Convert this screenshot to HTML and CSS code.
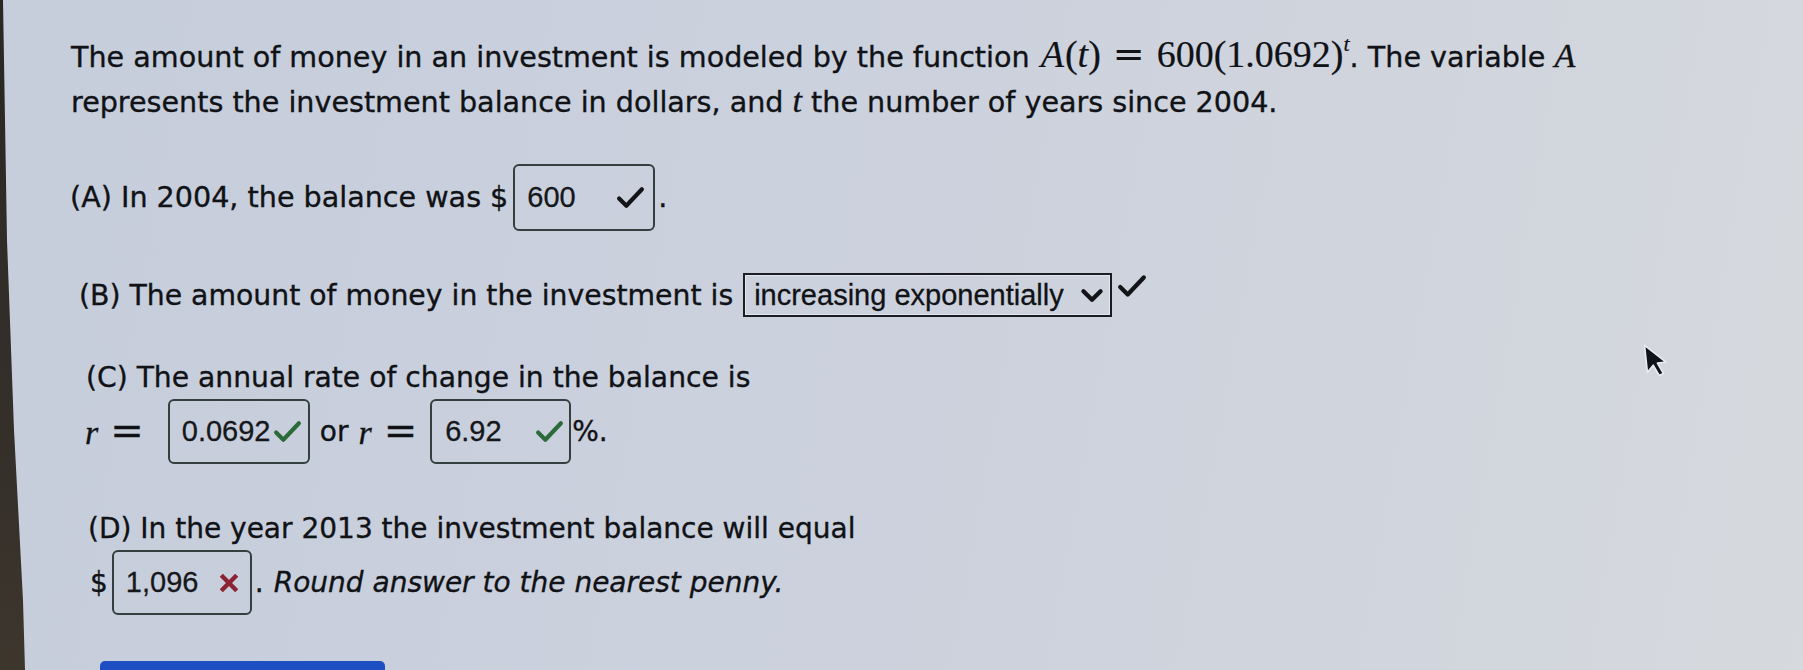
FILE: index.html
```html
<!DOCTYPE html>
<html lang="en">
<head>
<meta charset="utf-8">
<title>Investment model</title>
<link rel="stylesheet" href="styles.css">
</head>
<body>
<div class="bezel"></div>
<main class="page">
  <p class="intro">The amount of money in an investment is modeled by the function <span class="math"><i>A</i>(<i>t</i>)<span class="eq">=</span>600(1.0692)<sup><i>t</i></sup></span>. The variable <i class="mv">A</i><br>represents the investment balance in dollars, and <i class="mv">t</i> the number of years since 2004.</p>

  <div class="row row-a">
    <span class="txt">(A) In 2004, the balance was $</span>
    <span class="answer ans-a"><span class="val">600</span><svg class="check" viewBox="0 0 28 22"><path d="M3 12 L10 19 L25 3"/></svg></span>
    <span class="txt dot">.</span>
  </div>

  <div class="row row-b">
    <span class="txt">(B) The amount of money in the investment is</span>
    <span class="select"><span class="sel-text">increasing exponentially</span><svg class="chev" viewBox="0 0 22 14"><path d="M3 3 L11 11 L19 3"/></svg></span>
    <svg class="check check-b" viewBox="0 0 28 22"><path d="M3 12 L10 19 L25 3"/></svg>
  </div>

  <p class="line row-c1">(C) The annual rate of change in the balance is</p>
  <div class="row row-c2">
    <span class="mr"><i>r</i><span class="eq">=</span></span>
    <span class="answer ans-c1"><span class="val">0.0692</span><svg class="check green" viewBox="0 0 28 22"><path d="M3 12 L10 19 L25 3"/></svg></span>
    <span class="txt or">or</span>
    <span class="mr"><i>r</i><span class="eq">=</span></span>
    <span class="answer ans-c2"><span class="val">6.92</span><svg class="check green" viewBox="0 0 28 22"><path d="M3 12 L10 19 L25 3"/></svg></span>
    <span class="txt pct">%.</span>
  </div>

  <p class="line row-d1">(D) In the year 2013 the investment balance will equal</p>
  <div class="row row-d2">
    <span class="txt">$</span>
    <span class="answer ans-d"><span class="val">1,096</span><svg class="cross" viewBox="0 0 20 20"><path d="M3 3 L17 17 M17 3 L3 17"/></svg></span>
    <span class="txt dot">.</span>
    <span class="txt note">Round answer to the nearest penny.</span>
  </div>

  <div class="button-bar"></div>
</main>
<svg class="cursor" viewBox="0 0 22 34"><path d="M2 2 L2 27 L8 21 L12.5 31 L16.5 29.5 L12 19.5 L20 19.5 Z"/></svg>
</body>
</html>
```

FILE: styles.css
```css
html, body {
  margin: 0;
  padding: 0;
  height: 100%;
  overflow: hidden;
}
body {
  background: linear-gradient(100deg, #c6cddb 0%, #cbd1dd 45%, #d1d5dd 80%, #d6d9dd 100%);
  font-family: "DejaVu Sans", Verdana, sans-serif;
  font-size: 28px;
  color: #101216;
  -webkit-text-stroke: 0.35px #101216;
  position: relative;
}
.bezel {
  position: absolute;
  left: 0;
  top: 0;
  width: 28px;
  height: 100%;
  background: linear-gradient(180deg, #2a2724 0%, #35302a 70%, #3d362d 100%);
  clip-path: polygon(0 0, 3px 0, 7px 240px, 14px 430px, 23px 600px, 25px 670px, 0 670px);
}
.page {
  padding-top: 33px;
}
.intro {
  margin: 0 0 0 71px;
  line-height: 43px;
  font-size: 28.6px;
}
.math {
  font-family: "Liberation Serif", "Times New Roman", serif;
  font-size: 38px;
  -webkit-text-stroke: 0.2px #101216;
}
.math i, .mv, .mr i {
  font-family: "Liberation Serif", "Times New Roman", serif;
  font-style: italic;
}
.math > i:first-child {
  margin-left: 2px;
  margin-right: 1px;
}
.mv {
  font-size: 34px;
}
.eq {
  font-family: "DejaVu Serif", serif;
  margin: 0 12px;
}
.math sup {
  font-size: 22px;
  vertical-align: 16px;
  line-height: 0;
}
.row {
  display: flex;
  align-items: center;
  line-height: 43px;
}
.line {
  margin: 0;
  line-height: 43px;
}
.row-a {
  margin: 40px 0 0 70px;
  height: 67px;
  font-size: 28.6px;
}
.row-b {
  margin: 42px 0 0 79px;
  height: 44px;
  font-size: 28.3px;
}
.row-c1 {
  margin: 39px 0 0 86px;
  font-size: 28.2px;
}
.row-c2 {
  margin: 0 0 0 85px;
  height: 65px;
}
.row-d1 {
  margin: 43px 0 0 88px;
}
.row-d2 {
  margin: 0 0 0 90px;
  height: 65px;
}
.answer {
  box-sizing: border-box;
  display: flex;
  align-items: center;
  justify-content: space-between;
  height: 100%;
  border: 2px solid #33403f;
  border-radius: 6px;
  font-family: "Liberation Sans", Arial, sans-serif;
  font-size: 29px;
  color: #15171a;
  -webkit-text-stroke: 0.3px #15171a;
}
.ans-a {
  width: 142px;
  margin-left: 5px;
  padding: 0 8px 0 12px;
}
.ans-c1 {
  width: 142px;
  margin-left: 24px;
  padding: 0 6px 0 12px;
}
.ans-c2 {
  width: 141px;
  margin-left: 13px;
  padding: 0 5px 0 13px;
}
.ans-d {
  width: 140px;
  margin-left: 4px;
  padding: 0 10px 0 12px;
}
.check {
  width: 29px;
  height: 23px;
  fill: none;
  stroke: #121418;
  stroke-width: 4;
  stroke-linecap: round;
  stroke-linejoin: round;
}
.check.green {
  stroke: #2d6a3a;
}
.cross {
  width: 22px;
  height: 22px;
  fill: none;
  stroke: #8b2332;
  stroke-width: 4;
}
.dot {
  margin-left: 3px;
}
.select {
  box-sizing: border-box;
  display: flex;
  align-items: center;
  justify-content: space-between;
  height: 44px;
  width: 369px;
  margin-left: 10px;
  padding: 0 6px 0 9px;
  border: 2px solid #1a1e24;
  box-shadow: inset 0 0 0 1px #e3e6ec;
  font-family: "Liberation Sans", Arial, sans-serif;
  font-size: 29px;
  -webkit-text-stroke: 0.3px #101216;
}
.chev {
  width: 24px;
  height: 15px;
  fill: none;
  stroke: #121418;
  stroke-width: 4;
  stroke-linecap: round;
  stroke-linejoin: round;
}
.check-b {
  margin-left: 5px;
  align-self: flex-start;
  margin-top: 1px;
  width: 30px;
  height: 24px;
}
.mr {
  font-size: 34px;
}
.mr .eq {
  margin: 0 0 0 12px;
  font-size: 40px;
}
.or {
  margin-left: 10px;
}
.or + .mr {
  margin-left: 10px;
}
.pct {
  margin-left: 1px;
}
.note {
  font-style: italic;
  margin-left: 10px;
}
.button-bar {
  margin: 46px 0 0 100px;
  width: 285px;
  height: 30px;
  background: #1d4ec2;
  border-radius: 5px 5px 0 0;
}
.cursor {
  position: absolute;
  left: 1644px;
  top: 342px;
  width: 24px;
  height: 37px;
  fill: #101418;
  stroke: #e8ecf2;
  stroke-width: 1.5;
  stroke-linejoin: round;
  transform: rotate(-6deg);
}
```
